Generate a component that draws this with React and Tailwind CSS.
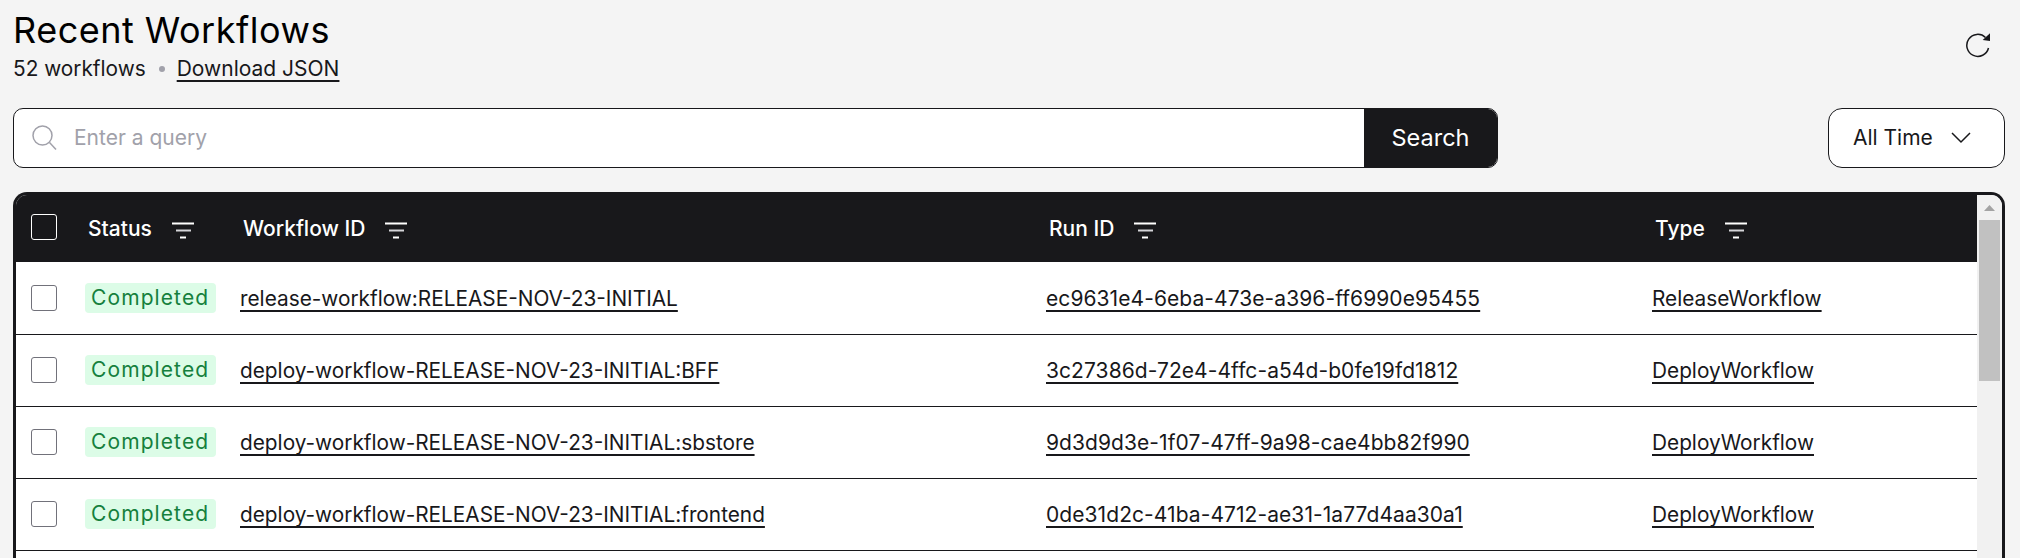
import React from 'react';

const rows = [
  {
    workflow: 'release-workflow:RELEASE-NOV-23-INITIAL',
    run: 'ec9631e4-6eba-473e-a396-ff6990e95455',
    type: 'ReleaseWorkflow',
  },
  {
    workflow: 'deploy-workflow-RELEASE-NOV-23-INITIAL:BFF',
    run: '3c27386d-72e4-4ffc-a54d-b0fe19fd1812',
    type: 'DeployWorkflow',
  },
  {
    workflow: 'deploy-workflow-RELEASE-NOV-23-INITIAL:sbstore',
    run: '9d3d9d3e-1f07-47ff-9a98-cae4bb82f990',
    type: 'DeployWorkflow',
  },
  {
    workflow: 'deploy-workflow-RELEASE-NOV-23-INITIAL:frontend',
    run: '0de31d2c-41ba-4712-ae31-1a77d4aa30a1',
    type: 'DeployWorkflow',
  },
];

const gridCols = 'grid grid-cols-[69px_155px_806px_606px_325px] items-center';

function FilterIcon() {
  return (
    <svg width="22" height="20" viewBox="0 0 22 20" fill="none" stroke="white" strokeWidth="2" className="ml-[20px]">
      <path d="M0 4.5h22" />
      <path d="M4 11.5h15" stroke="#d4d4d8" />
      <path d="M8 18.5h6" />
    </svg>
  );
}

function HeaderCell({ label }) {
  return (
    <div className="flex items-center pt-[3px] pl-[3px] text-[21px] font-medium text-white">
      {label}
      <FilterIcon />
    </div>
  );
}

export default function App() {
  return (
    <div className="h-[558px] overflow-hidden bg-[#f4f4f4] pr-[15px] pl-[13px] font-['Inter',sans-serif] text-[#18181b]">
      {/* Title */}
      <div className="flex h-[108px] items-start justify-between">
        <div>
          <h1 className="pt-[9px] text-[36px] leading-[42px] tracking-[0.5px] text-black">Recent Workflows</h1>
          <div className="mt-[4px] flex items-center text-[21px] leading-[28px]">
            <span className="text-[20.8px]">52 workflows</span>
            <span className="mr-[12px] ml-[13px] h-[6px] w-[6px] rounded-full bg-[#a1a1aa]"></span>
            <a className="underline decoration-2 underline-offset-4">Download JSON</a>
          </div>
        </div>
        <button className="mt-[32px] mr-[13px]">
          <svg width="26" height="26" viewBox="0 0 26 26" fill="none" stroke="#18181b" strokeWidth="1.5">
            <path d="M19.5 5.5A11 11 0 1 0 22.5 16" />
            <path d="M24 1.3V9L16.7 8z" fill="#18181b" stroke="none" />
          </svg>
        </button>
      </div>

      {/* Search */}
      <div className="flex justify-between">
        <div className="flex h-[60px] w-[1485px] overflow-hidden rounded-[10px] border border-[#18181b] bg-white">
          <div className="flex flex-1 items-center pl-[18px]">
            <svg width="26" height="26" viewBox="0 0 26 26" fill="none" stroke="#a1a1aa" strokeWidth="1.5">
              <circle cx="10.5" cy="10.5" r="9.5" />
              <path d="M17.5 17.5l6.5 7" />
            </svg>
            <span className="ml-[16px] text-[21px] text-[#a1a1aa]">Enter a query</span>
          </div>
          <button className="w-[133px] bg-[#18181b] text-[23.5px] text-white">Search</button>
        </div>
        <button className="flex h-[60px] w-[177px] items-center justify-between rounded-[14px] border border-[#18181b] bg-white pr-[33px] pl-[24px] text-[21px]">
          All Time
          <svg width="20" height="12" viewBox="0 0 20 12" fill="none" stroke="#18181b" strokeWidth="1.5">
            <path d="M1 1l9 9 9-9" />
          </svg>
        </button>
      </div>

      {/* Table */}
      <div className="mt-[24px] flex h-[400px] overflow-hidden rounded-t-[14px] border-x-[3px] border-t-[3px] border-[#18181b] bg-white">
        <div className="flex-1">
          <div className={`${gridCols} -mt-[3px] h-[70px] bg-[#18181b]`}>
            <div className="pl-[15px]">
              <div className="h-[26px] w-[26px] rounded-[3px] border border-white"></div>
            </div>
            <HeaderCell label="Status" />
            <HeaderCell label="Workflow ID" />
            <HeaderCell label="Run ID" />
            <HeaderCell label="Type" />
          </div>
          <div className="pt-px">
            {rows.map((row) => (
              <div key={row.run} className={`${gridCols} h-[72px] border-b border-[#18181b] text-[20.8px]`}>
                <div className="pb-[2px] pl-[15px]">
                  <div className="h-[26px] w-[26px] rounded-[3px] border border-[#71717a]"></div>
                </div>
                <div className="pb-[1px]">
                  <span className="inline-block h-[30px] w-[131px] rounded-[4px] bg-[#dcfce7] pl-[6px] text-[21px] leading-[30px] tracking-[1.1px] text-[#15803d]">
                    Completed
                  </span>
                </div>
                <a className="underline decoration-2 underline-offset-4">{row.workflow}</a>
                <a className="text-[21px] tracking-[0.07px] underline decoration-2 underline-offset-4">{row.run}</a>
                <a className="underline decoration-2 underline-offset-4">{row.type}</a>
              </div>
            ))}
          </div>
        </div>
        {/* Scrollbar */}
        <div className="flex w-[25px] flex-col items-center bg-[#f1f1f1]">
          <svg width="11" height="6" viewBox="0 0 11 6" fill="#a3a3a3" className="mt-[10px]">
            <path d="M5.5 0L11 6H0z" />
          </svg>
          <div className="mt-[9px] h-[161px] w-[21px] bg-[#c1c1c1]"></div>
        </div>
      </div>
    </div>
  );
}
